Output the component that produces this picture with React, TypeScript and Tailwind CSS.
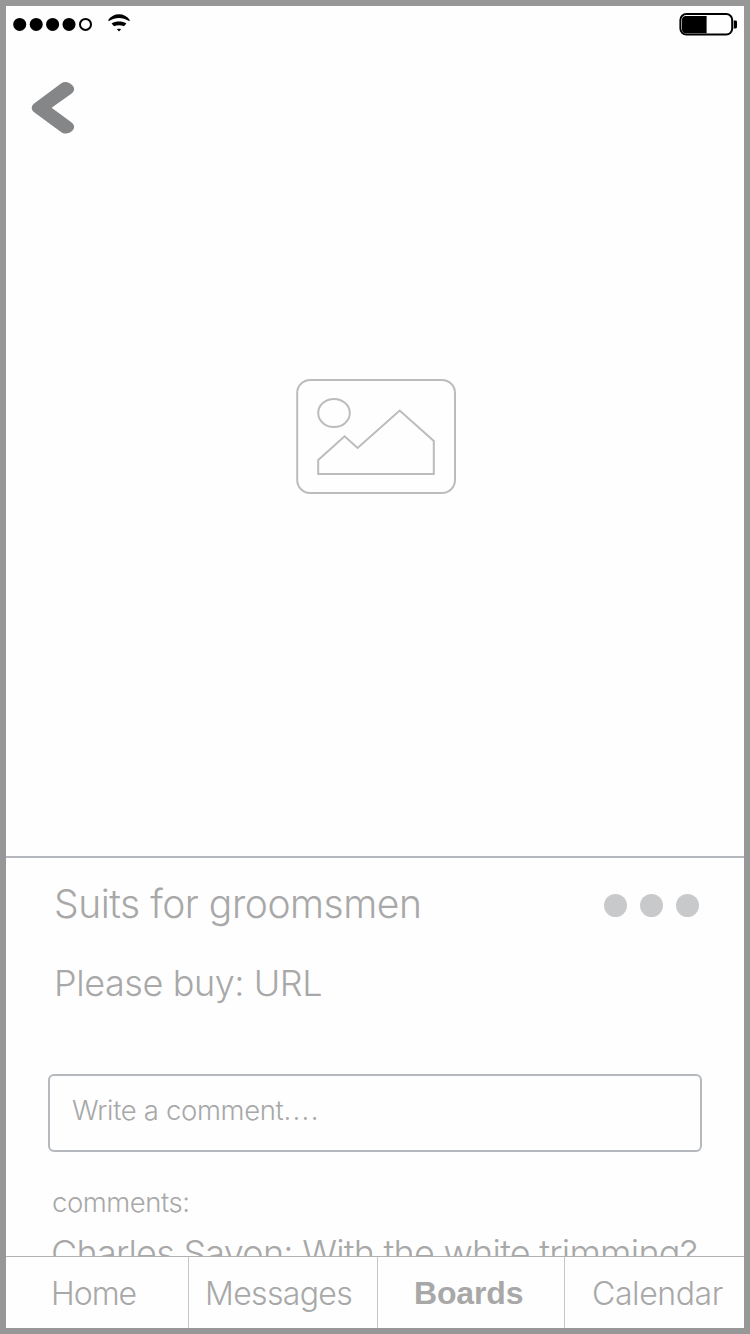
import type { ReactNode } from "react";

function SignalDots() {
  return (
    <svg width="120" height="24" viewBox="0 0 120 24" className="block">
      <circle cx="7.7" cy="12.4" r="6.5" />
      <circle cx="24.2" cy="12.4" r="6.5" />
      <circle cx="40.6" cy="12.4" r="6.5" />
      <circle cx="57" cy="12.4" r="6.5" />
      <circle cx="73.5" cy="12.4" r="5.5" fill="none" stroke="#000" strokeWidth="2" />
      <path d="M96 8.2C101.5 0.4 112.5 0.4 118 8.2L117 9.1C110.5 4.9 103.5 4.9 97 9.1Z" />
      <path d="M99.6 11.4C104 8.9 110 8.9 114.4 11.4L112 14.2C109 13 105 13 102 14.2Z" />
      <path d="M104.8 17Q107 16.4 109.2 17L107 19.4Z" />
    </svg>
  );
}

function Battery() {
  return (
    <svg width="60" height="24" viewBox="0 0 60 24" className="block">
      <rect x="2.4" y="2" width="51.8" height="20.6" rx="6" fill="none" stroke="#000" strokeWidth="2" />
      <path d="M8 4H28.6V21.3H8Q4 21.3 4 17.3V8Q4 4 8 4Z" />
      <path d="M55.8 8.4H57.6Q59 8.4 59 9.8V15Q59 16.4 57.6 16.4H55.8Z" />
    </svg>
  );
}

function Picture() {
  return (
    <svg width="162" height="118" viewBox="0 0 162 118" fill="none" stroke="#bcbcbe" strokeWidth="2" className="block">
      <rect x="2.2" y="3" width="157.8" height="113" rx="13" />
      <ellipse cx="39" cy="36" rx="15.8" ry="14" />
      <path d="M23.2 83 L49.6 59.3 L62.6 71 L104.7 33.5 L138.8 64 V97 H23.2 Z" />
    </svg>
  );
}

function Tab({ className, children }: { className: string; children: ReactNode }) {
  return <div className={`whitespace-nowrap leading-[48px] ${className}`}>{children}</div>;
}

export default function App() {
  return (
    <div className="flex h-[1334px] w-[750px] flex-col overflow-hidden border-6 border-[#979797] bg-[#fefefe] font-['Inter',sans-serif] font-light text-[#a8a8a8]">
      <div className="flex h-9 shrink-0 items-start justify-between pl-1.5 pt-1.5 pr-[6px]">
        <SignalDots />
        <Battery />
      </div>

      <main className="flex h-[814px] shrink-0 flex-col px-6 pt-[38px]">
        <svg width="48" height="56" viewBox="0 0 48 56" className="block">
          <path
            d="M31 3.5C35 0.8 39.5 2.3 42.5 5.5C45 8.5 44.5 11.5 41 14L21.6 27.7L41 42C44.5 44.5 45 47.5 42.5 50.5C39.5 53.7 35 54.6 31 52L3.8 32C1.1 29.5 1.1 26.2 3.8 23.7Z"
            fill="#858688"
          />
        </svg>
        <div className="ml-[265px] mt-[241px]">
          <Picture />
        </div>
      </main>

      <section className="h-[400px] shrink-0 overflow-hidden border-t-2 border-[#b5b9be] pt-[22px]">
        <div className="flex h-12 items-center justify-between pl-12 pr-[45px]">
          <h1 className="whitespace-nowrap text-[39px] leading-[48px] tracking-[-0.48px]">Suits for groomsmen</h1>
          <div className="flex gap-[13px] pt-[2px]">
            <span className="size-[23px] rounded-full bg-[#c8c9cb]" />
            <span className="size-[23px] rounded-full bg-[#c8c9cb]" />
            <span className="size-[23px] rounded-full bg-[#c8c9cb]" />
          </div>
        </div>
        <p className="mt-[31px] whitespace-nowrap pl-12 text-[36px] leading-[48px] tracking-[-0.42px]">Please buy: URL</p>
        <div className="ml-[42px] mt-[67px] h-[78px] w-[654px] whitespace-nowrap rounded-md border-2 border-[#b5b9be] pl-[22px] pt-[14px] text-[27.5px] leading-10 tracking-[-0.35px]">
          Write a comment<span className="tracking-[1.3px]">....</span>
        </div>
        <p className="mt-[30px] whitespace-nowrap pl-[46px] text-[27.5px] leading-10 tracking-[-0.45px]">comments:</p>
        <p className="mt-[7px] whitespace-nowrap pl-[45px] text-[36px] leading-[48px] tracking-[-0.76px]">
          Charles Savon: With the white trimming?
        </p>
      </section>

      <nav className="flex h-[72px] shrink-0 border-t border-[#b2b2b2] text-[32px]">
        <Tab className="w-[183px] border-r border-[#c6c6c6] pl-[45px] pt-[13px] tracking-[-1px]">Home</Tab>
        <Tab className="w-[189px] border-r border-[#c6c6c6] pl-[16px] pt-[13px] tracking-[-0.65px]">Messages</Tab>
        <Tab className="w-[187px] border-r border-[#c6c6c6] pl-[36px] pt-3 font-['Liberation_Sans',sans-serif] font-bold tracking-[-0.15px]">Boards</Tab>
        <Tab className="w-[179px] pl-[27px] pt-[13px] tracking-[-0.4px]">Calendar</Tab>
      </nav>
    </div>
  );
}
